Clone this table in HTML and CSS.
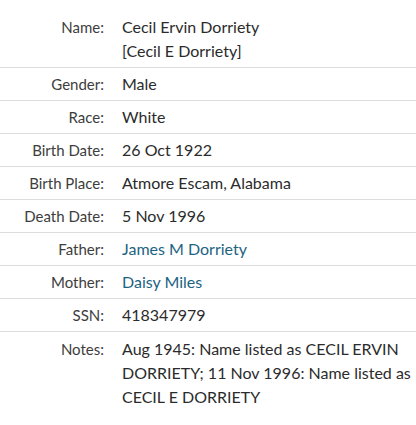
FILE: index.html
```html
<!DOCTYPE html>
<html>
<head>
<meta charset="utf-8">
<link rel="stylesheet" href="styles.css">
</head>
<body>
<div class="record">
  <div class="row"><div class="label">Name:</div><div class="value">Cecil Ervin Dorriety<br>[Cecil E Dorriety]</div></div>
  <div class="row"><div class="label">Gender:</div><div class="value">Male</div></div>
  <div class="row"><div class="label">Race:</div><div class="value">White</div></div>
  <div class="row"><div class="label">Birth Date:</div><div class="value">26 Oct 1922</div></div>
  <div class="row"><div class="label">Birth Place:</div><div class="value">Atmore Escam, Alabama</div></div>
  <div class="row"><div class="label">Death Date:</div><div class="value">5 Nov 1996</div></div>
  <div class="row"><div class="label">Father:</div><div class="value"><a class="link" href="#">James M Dorriety</a></div></div>
  <div class="row"><div class="label">Mother:</div><div class="value"><a class="link" href="#">Daisy Miles</a></div></div>
  <div class="row"><div class="label">SSN:</div><div class="value">418347979</div></div>
  <div class="row last"><div class="label">Notes:</div><div class="value">Aug 1945: Name listed as CECIL ERVIN DORRIETY; 11 Nov 1996: Name listed as CECIL E DORRIETY</div></div>
</div>
</body>
</html>
```
FILE: styles.css
```css
html, body {
  margin: 0;
  padding: 0;
  background: #fff;
}
body {
  font-family: Lato, "Open Sans", sans-serif;
  color: #333;
}
.record {
  padding-top: 11px;
}
.row {
  display: grid;
  grid-template-columns: 104px 1fr;
  border-bottom: 1px solid #dcdcdc;
  padding: 4px 0;
}
.row.last {
  border-bottom: none;
  padding-top: 5px;
}
.label {
  text-align: right;
  font-size: 15px;
  line-height: 24px;
  color: #3d3d3d;
}
.value {
  padding-left: 18px;
  font-size: 16px;
  line-height: 24px;
  color: #2b2b2b;
}
.link {
  color: #1d6382;
  text-decoration: none;
}
```
